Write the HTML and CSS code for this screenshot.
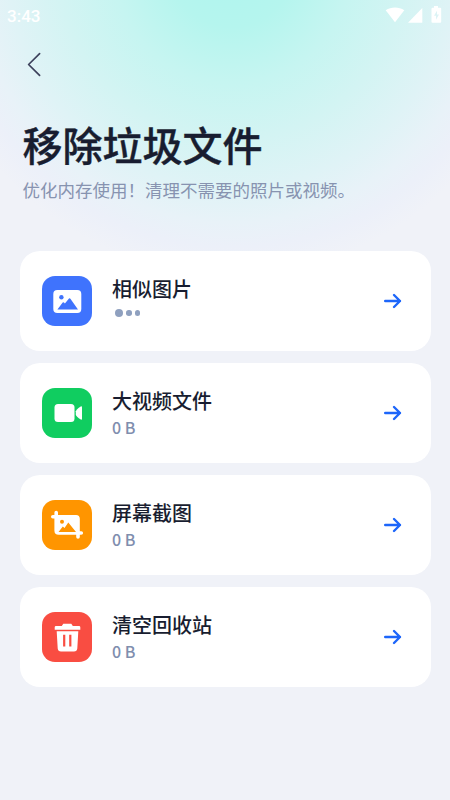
FILE: index.html
```html
<!DOCTYPE html>
<html lang="zh-CN">
<head>
<meta charset="utf-8">
<title>移除垃圾文件</title>
<link rel="stylesheet" href="styles.css">
</head>
<body>
<div class="status">
  <span class="time">3:43</span>
  <svg class="signals" width="58" height="20" viewBox="0 0 58 20" fill="#fff">
    <path d="M.7 5.200C6 1.500 14 1.500 19.300 5.200L10 17.300Z"/>
    <path d="M37.300 3V17.700H23Z"/>
    <path fill-rule="evenodd" d="M49 2.700V1.100h4v1.600h2.200q1 0 1 1V16.700q0 1-1 1H47.500q-1 0-1-1V3.700q0-1 1-1ZM52 5.700L49 10.800H51V14.700L54 9.400H52Z"/>
  </svg>
</div>
<nav class="nav">
  <svg width="14" height="25" viewBox="0 0 14 25" fill="none" stroke="#3c405b" stroke-width="1.7" stroke-linecap="round" stroke-linejoin="round"><path d="M12.600 1.700L1.600 12.500L12.600 23.400"/></svg>
</nav>
<header class="heading">
  <h1>移除垃圾文件</h1>
  <p>优化内存使用！清理不需要的照片或视频。</p>
</header>
<main class="list">
  <section class="card">
    <div class="icon blue">
      <svg width="50" height="50" viewBox="0 0 50 50"><rect x="11.300" y="14" width="28" height="23" rx="4" fill="#fff"/><circle cx="19.400" cy="21.300" r="2.200" fill="#3f73fd"/><path d="M15.400 33.400L20.700 26.500Q21.300 25.900 22 26.600L22.900 27.600L27 22.600Q27.700 21.900 28.400 22.700L36 33.400Z" fill="#3f73fd"/></svg>
    </div>
    <div class="text"><h2>相似图片</h2><div class="dots"><i></i><i></i><i></i></div></div>
    <svg class="arrow" width="20" height="18" viewBox="0 0 20 18"><path d="M2.200 9H17M11 3L17 9L11 15"/></svg>
  </section>
  <section class="card">
    <div class="icon green">
      <svg width="50" height="50" viewBox="0 0 50 50" fill="#fff"><rect x="12.500" y="16" width="20" height="18" rx="3.500"/><path d="M33.800 23.300Q34.300 21.500 38.300 18.700Q40 17.700 40 19.200V30.800Q40 32.300 38.300 31.300Q34.300 28.500 33.800 26.800Z"/></svg>
    </div>
    <div class="text"><h2>大视频文件</h2><p>0 B</p></div>
    <svg class="arrow" width="20" height="18" viewBox="0 0 20 18"><path d="M2.200 9H17M11 3L17 9L11 15"/></svg>
  </section>
  <section class="card">
    <div class="icon orange">
      <svg width="50" height="50" viewBox="0 0 50 50"><path d="M14.500 16H35.500V33.500H14.500Z" fill="#fff"/><path d="M10.800 16.700H34Q36 16.700 36 18.700V37M14.200 12.500V30.500Q14.200 33 16.700 33H39.300" fill="none" stroke="#fff" stroke-width="3.600" stroke-linecap="round"/><circle cx="20" cy="21.700" r="2" fill="#ff9500"/><path d="M16.500 32L20.800 26.500L22.500 28L26.300 22.600L34 32Z" fill="#ff9500"/></svg>
    </div>
    <div class="text"><h2>屏幕截图</h2><p>0 B</p></div>
    <svg class="arrow" width="20" height="18" viewBox="0 0 20 18"><path d="M2.200 9H17M11 3L17 9L11 15"/></svg>
  </section>
  <section class="card">
    <div class="icon red">
      <svg width="50" height="50" viewBox="0 0 50 50"><path d="M14 14H19.800L21.300 11.700H29.300L30.800 14H37Q38.300 14 38.300 15.300V17.700H12.700V15.300Q12.700 14 14 14ZM14.700 19.300H36.300L35.300 36.500Q35 39.500 32 39.500H19Q16 39.500 15.700 36.500Z" fill="#fff"/><path d="M22.200 22.800V34.500M28.300 22.800V34.500" stroke="#f94d42" stroke-width="2.200"/></svg>
    </div>
    <div class="text"><h2>清空回收站</h2><p>0 B</p></div>
    <svg class="arrow" width="20" height="18" viewBox="0 0 20 18"><path d="M2.200 9H17M11 3L17 9L11 15"/></svg>
  </section>
</main>
</body>
</html>
```
FILE: styles.css
```css
* { box-sizing: border-box; margin: 0; padding: 0; }
body {
  height: 800px;
  overflow: hidden;
  font-family: "Noto Sans CJK SC", sans-serif;
  color: #181d30;
  background: radial-gradient(circle 310px at 232px -35px, #aff5ee 0%, #b5f5ee 20%, #c6f5f1 38%, #d3f4f3 56%, #dff3f6 72%, #e8f2f8 83%, #ecf0f9 91%, #f0f2f8 100%);
}
.status {
  height: 32px;
  padding: 5px 7px 0 7px;
  display: flex;
  justify-content: space-between;
}
.time {
  font: 500 17px/22px Roboto, sans-serif;
  color: #fff;
}
.nav { height: 83px; padding: 20px 0 0 27px; }
.nav svg { display: block; }
.heading { height: 136px; padding-left: 22.500px; }
h1 {
  font-size: 40px;
  line-height: 58px;
  font-weight: 500;
  -webkit-text-stroke: 0.4px #181d30;
}
.heading p {
  font-size: 17.5px;
  line-height: 26px;
  margin-top: 4px;
  color: #8793b0;
}
.list {
  padding: 0 19px 0 19.500px;
  display: flex;
  flex-direction: column;
  gap: 12px;
}
.card {
  height: 100px;
  border-radius: 20px;
  background: #fff;
  padding: 0 28px 0 22px;
  display: flex;
  align-items: center;
}
.icon { width: 50.500px; height: 50px; border-radius: 13px; flex: none; }
.icon svg { display: block; }
.blue { background: #3f73fd; }
.green { background: #10cd60; }
.orange { background: #ff9500; }
.red { background: #f94d42; }
.text { flex: 1; height: 100px; padding: 23px 0 0 20px; }
h2 { font-size: 20px; line-height: 30px; font-weight: 500; }
.text p {
  font-size: 16px;
  line-height: 22px;
  font-weight: 500;
  color: #7f8eae;
}
.dots { display: flex; align-items: center; gap: 3px; padding: 5px 0 0 3px; }
.dots i { width: 5.500px; height: 5.500px; border-radius: 50%; background: #8fa0bf; }
.dots i:first-child { width: 8px; height: 8px; }
.arrow {
  fill: none;
  stroke: #1d66fa;
  stroke-width: 2.400;
  stroke-linecap: round;
  stroke-linejoin: round;
}
```
